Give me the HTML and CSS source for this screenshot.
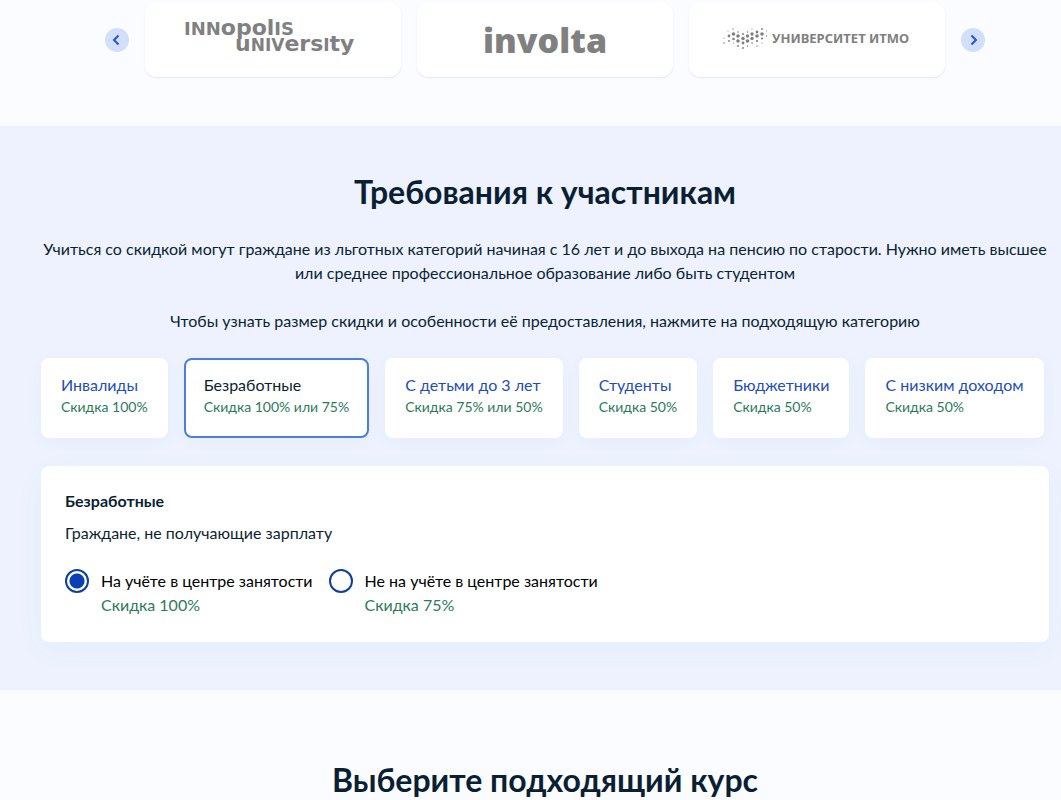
FILE: index.html
```html
<!DOCTYPE html>
<html lang="ru">
<head>
<meta charset="utf-8">
<meta name="viewport" content="width=device-width, initial-scale=1">
<title>Требования к участникам</title>
<link rel="stylesheet" href="styles.css">
</head>
<body>
<section class="partners" aria-label="Партнёры">
  <button class="arrow" type="button" aria-label="Назад"><svg width="24" height="24" viewBox="0 0 24 24"><path d="M13.500 7.500 9 12l4.500 4.500"/></svg></button>
  <div class="track">
    <div class="partner">
      <svg class="logo" width="176" height="50" viewBox="0 0 176 50" role="img" aria-label="Innopolis University">
        <g font-family="DejaVu Sans" font-weight="700">
          <text x="-1" y="25" font-size="22"><tspan font-size="18">INN</tspan>opol<tspan font-size="18">IS</tspan></text>
          <text x="50" y="41" font-size="22">u<tspan font-size="17">NIV</tspan>ers<tspan font-size="17">I</tspan>ty</text>
        </g>
      </svg>
    </div>
    <div class="partner">
      <svg class="logo" width="124" height="50" viewBox="0 0 124 50" role="img" aria-label="involta">
        <text x="0" y="43" font-family="Open Sans" font-weight="800" font-size="34">involta</text>
      </svg>
    </div>
    <div class="partner">
      <svg class="logo" width="190" height="50" viewBox="0 0 190 50" role="img" aria-label="Университет ИТМО">
        <g>
          <circle cx="2" cy="28" r=".6"/><circle cx="2" cy="33" r=".8"/>
          <circle cx="6" cy="21" r=".5"/><circle cx="7" cy="26" r="1.4"/><circle cx="7" cy="31" r=".9"/>
          <circle cx="11" cy="19" r=".7"/><circle cx="11.500" cy="24" r="1.8"/><circle cx="11.500" cy="29" r="1.3"/><circle cx="11.500" cy="33" r=".6"/>
          <circle cx="16" cy="22" r=".8"/><circle cx="16" cy="26" r="1.8"/><circle cx="16" cy="31" r="1.8"/><circle cx="16" cy="36" r=".9"/>
          <circle cx="21" cy="24" r="1"/><circle cx="21" cy="28.500" r="1.8"/><circle cx="21" cy="33" r="1.4"/><circle cx="21" cy="38" r=".9"/>
          <circle cx="25.500" cy="22" r=".8"/><circle cx="25.500" cy="26" r="1.7"/><circle cx="25.500" cy="31" r="1.8"/><circle cx="25.500" cy="36" r=".8"/>
          <circle cx="30" cy="19" r=".6"/><circle cx="30" cy="24" r="1.7"/><circle cx="30" cy="28.500" r="1.7"/><circle cx="30" cy="33" r=".8"/>
          <circle cx="35" cy="22" r="1.4"/><circle cx="35" cy="26" r="1.8"/><circle cx="35" cy="31" r="1.1"/><circle cx="35" cy="36" r=".7"/>
          <circle cx="40" cy="19" r=".9"/><circle cx="40" cy="24" r="1.8"/><circle cx="40" cy="28.500" r="1.1"/><circle cx="40" cy="33" r=".6"/>
          <circle cx="44.500" cy="21" r=".5"/><circle cx="44.500" cy="26" r=".7"/>
        </g>
        <text x="50" y="33" font-family="Noto Sans" font-weight="700" font-size="13">УНИВЕРСИТЕТ ИТМО</text>
      </svg>
    </div>
  </div>
  <button class="arrow" type="button" aria-label="Вперёд"><svg width="24" height="24" viewBox="0 0 24 24"><path d="M10.500 7.500 15 12l-4.500 4.500"/></svg></button>
</section>

<section class="requirements">
  <h2 class="title">Требования к участникам</h2>
  <p class="lead">Учиться со скидкой могут граждане из льготных категорий начиная с 16 лет и до выхода на пенсию по старости. Нужно иметь высшее или среднее профессиональное образование либо быть студентом</p>
  <p class="lead">Чтобы узнать размер скидки и особенности её предоставления, нажмите на подходящую категорию</p>
  <div class="categories">
    <button class="category" type="button"><span class="name">Инвалиды</span><span class="discount">Скидка 100%</span></button>
    <button class="category selected" type="button" aria-pressed="true"><span class="name">Безработные</span><span class="discount">Скидка 100% или 75%</span></button>
    <button class="category" type="button"><span class="name">С детьми до 3 лет</span><span class="discount">Скидка 75% или 50%</span></button>
    <button class="category" type="button"><span class="name">Студенты</span><span class="discount">Скидка 50%</span></button>
    <button class="category" type="button"><span class="name">Бюджетники</span><span class="discount">Скидка 50%</span></button>
    <button class="category" type="button"><span class="name">С низким доходом</span><span class="discount">Скидка 50%</span></button>
  </div>
  <div class="panel">
    <h3 class="panel-title">Безработные</h3>
    <p class="panel-text">Граждане, не получающие зарплату</p>
    <div class="options">
      <label class="option"><input class="radio" type="radio" name="status" checked><span>На учёте в центре занятости<span class="option-discount">Скидка 100%</span></span></label>
      <label class="option"><input class="radio" type="radio" name="status"><span>Не на учёте в центре занятости<span class="option-discount">Скидка 75%</span></span></label>
    </div>
  </div>
</section>

<section class="courses">
  <h2 class="title">Выберите подходящий курс</h2>
</section>
</body>
</html>
```
FILE: styles.css
```css
* { box-sizing: border-box; }
html { background: #fbfcff; }
body {
  margin: 0;
  overflow-x: hidden;
  font: 16px/24px Lato, "Noto Sans", sans-serif;
  color: #0b1f33;
}
h2, h3, p { margin: 0; }
.partners {
  display: flex;
  justify-content: center;
  align-items: center;
  gap: 16px;
  padding: 2px 12px 49px 41px;
}
.arrow {
  width: 24px;
  height: 24px;
  padding: 0;
  border: 0;
  border-radius: 50%;
  background: #d3dff9;
  cursor: pointer;
}
.arrow svg { display: block; fill: none; stroke: #2456c4; stroke-width: 2; }
.track { display: flex; gap: 16px; }
.partner {
  display: flex;
  justify-content: center;
  width: 256px;
  height: 75px;
  padding-top: 8px;
  border-radius: 12px;
  background: #fff;
  box-shadow: 0 1px 2px #dfe8f3;
}
.logo { display: block; overflow: visible; fill: #808080; }
.requirements {
  padding: 46px 12px 48px 41px;
  background: #edf2fe;
}
.title {
  font-size: 32px;
  line-height: 40px;
  font-weight: 700;
  text-align: center;
}
.requirements .title { margin-bottom: 25px; }
.lead { margin-bottom: 24px; text-align: center; }
.categories { display: flex; flex-wrap: wrap; gap: 16px; margin: 25px 0 28px; }
.category {
  display: flex;
  flex-direction: column;
  min-height: 80px;
  padding: 13px 18px;
  border: 2px solid #fff;
  border-radius: 8px;
  background: #fff;
  box-shadow: 0 4px 16px rgba(50, 90, 160, .04);
  font: inherit;
  color: #1d4eb8;
  text-align: left;
  cursor: pointer;
}
.selected { border-color: #4a7fdd; color: #0b1f33; }
.discount { font-size: 14px; line-height: 20px; color: #2c7a5c; }
.panel {
  padding: 23px 24px 25px;
  border-radius: 8px;
  background: #fff;
  box-shadow: 0 8px 32px rgba(50, 90, 160, .04);
}
.panel-title { margin-bottom: 8px; font-size: 16px; line-height: 24px; font-weight: 700; }
.panel-text { margin-bottom: 24px; }
.options { display: flex; flex-wrap: wrap; gap: 16px; }
.option { display: flex; gap: 12px; color: #000; cursor: pointer; }
.option-discount { display: block; color: #2c7a5c; }
.radio {
  appearance: none;
  flex: none;
  width: 24px;
  height: 24px;
  margin: 0;
  border: 2px solid #0d3f9f;
  border-radius: 50%;
  background: #fff;
}
.radio:checked { background: radial-gradient(circle, #0b40b3 7px, #fff 8px); }
.courses { padding: 70px 12px 0 41px; }
```
